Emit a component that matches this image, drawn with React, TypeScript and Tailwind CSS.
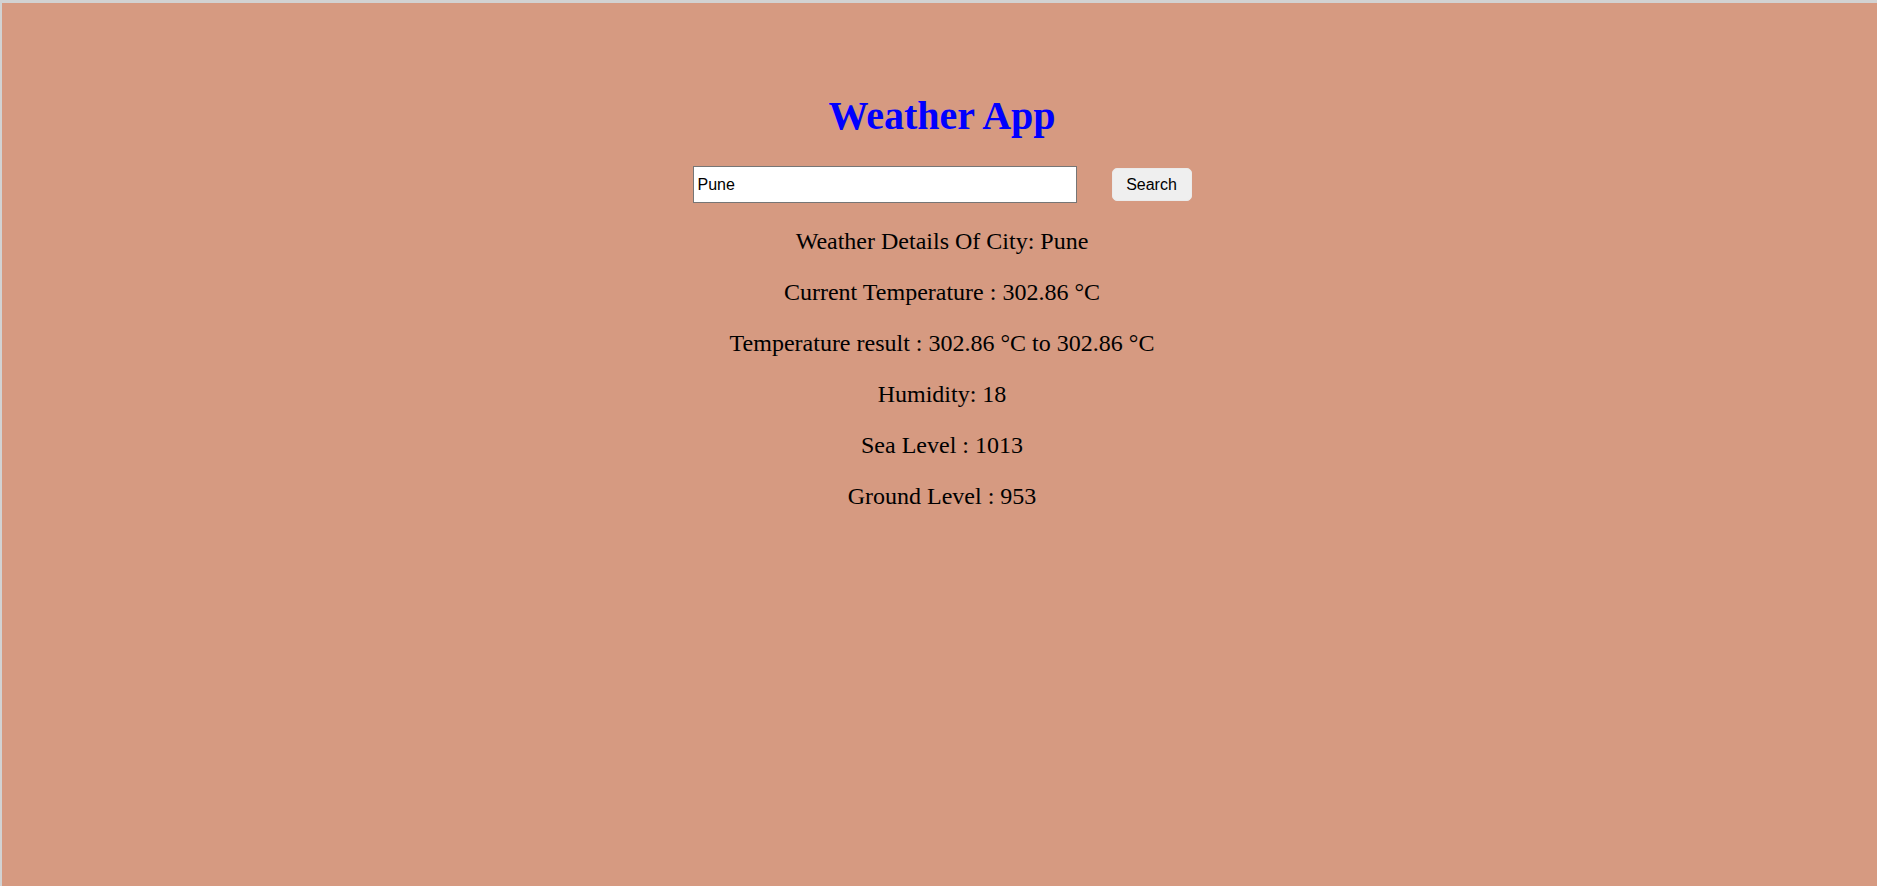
import React from "react";

export default function App() {
  const lines = [
    "Weather Details Of City: Pune",
    "Current Temperature : 302.86 °C",
    "Temperature result : 302.86 °C to 302.86 °C",
    "Humidity: 18",
    "Sea Level : 1013",
    "Ground Level : 953",
  ];
  return (
    <div className="box-border h-[886px] w-full overflow-hidden border-t-[3px] border-l-2 border-[#d2d2d2] bg-[#d69a81]">
      <div className="flex flex-col items-center pt-[91px] pl-[5px]">
        <h1
          className="m-0 text-[40px] font-bold leading-[44px] text-[#0000ff]"
          style={{ fontFamily: '"Liberation Serif", "Times New Roman", serif' }}
        >
          Weather App
        </h1>
        <div className="mt-[28px] flex items-center gap-[35px]">
          <input
            type="text"
            defaultValue="Pune"
            className="box-border h-[37px] w-[384px] border border-[#767676] bg-white pl-[4px] text-[16px] text-black outline-none"
            style={{ fontFamily: '"Liberation Sans", Arial, sans-serif' }}
          />
          <button
            className="box-border h-[33px] w-[80px] rounded-[5px] border border-[#ebebeb] bg-[#efefef] text-[16px] text-black"
            style={{ fontFamily: '"Liberation Sans", Arial, sans-serif' }}
          >
            Search
          </button>
        </div>
        <div
          className="mt-[25px] flex flex-col items-center gap-[24px] text-[24px] leading-[27px] text-black"
          style={{ fontFamily: '"Liberation Serif", "Times New Roman", serif' }}
        >
          {lines.map((l) => (
            <p key={l} className="m-0">
              {l}
            </p>
          ))}
        </div>
      </div>
    </div>
  );
}
